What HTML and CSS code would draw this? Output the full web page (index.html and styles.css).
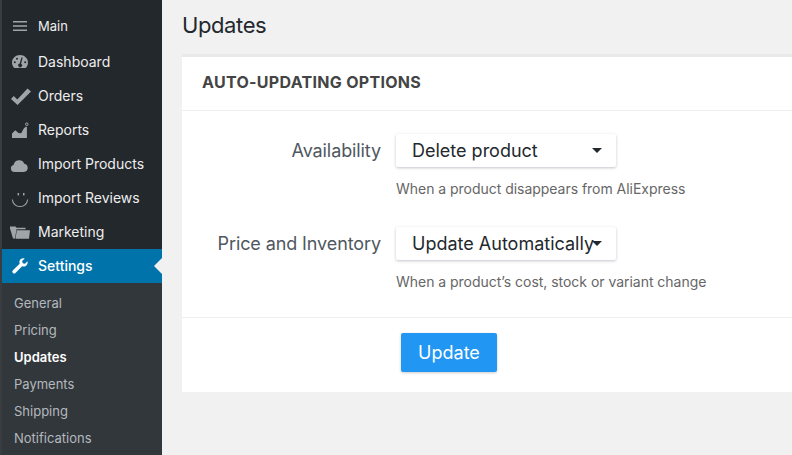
FILE: index.html
```html
<!DOCTYPE html>
<html lang="en">
<head>
  <meta charset="UTF-8" />
  <title>Updates</title>
  <link rel="stylesheet" href="styles.css">
</head>
<body>
  <div class="sidebar">
    <ul class="menu">
      <li class="menu-item menu-main">
        <svg class="icon" viewBox="0 0 16 16"><path d="M1 1h14v1.500H1zM1 5.200h14v1.500H1zM1 9.400h14v1.500H1z" transform="translate(0 2)"/></svg>
        Main
      </li>
      <li class="menu-item">
        <svg class="icon" viewBox="0 0 16 16"><path d="M8 1C3.600 1 0 4.300 0 8.400c0 2 .7 3.700 1.800 5.100.2.300.5.500.9.500h10.600c.4 0 .7-.2.900-.5C15.300 12.100 16 10.400 16 8.400 16 4.300 12.400 1 8 1zm2.700 2.600L9.100 9.700a1.900 1.900 0 1 1-1.400-.2l1.700-6.100zM2.800 7.200a1 1 0 1 1 0 2 1 1 0 0 1 0-2zM5 3.700a1 1 0 1 1 0 2 1 1 0 0 1 0-2zM13.200 7.200a1 1 0 1 1 0 2 1 1 0 0 1 0-2z" fill-rule="evenodd"/></svg>
        Dashboard
      </li>
      <li class="menu-item">
        <svg class="icon" viewBox="0 0 16 16"><path d="M-1 11 1.800 8l3.500 3.400L15.500 .5 19 3.500 5.500 17z"/></svg>
        Orders
      </li>
      <li class="menu-item">
        <svg class="icon" viewBox="0 0 16 16"><path d="M0 16v-4.500l3.300-3.300L6.500 11l2.700.2 2.600-4.700 2.200-2 .9.800V16z"/><circle cx="14.800" cy="2.200" r="1.300" fill="none" stroke="currentColor"/></svg>
        Reports
      </li>
      <li class="menu-item">
        <svg class="icon" viewBox="0 0 16 16"><path d="M2.500 16a3.500 3.500 0 0 1-.9-6.900A5.600 5.600 0 0 1 12.300 7.700 4.200 4.200 0 0 1 12 16z"/></svg>
        Import Products
      </li>
      <li class="menu-item">
        <svg class="icon" viewBox="0 0 16 16"><path d="M.3 9.500c.8 5 4.200 7 7.700 7s6.900-2 7.700-7" fill="none" stroke="currentColor" stroke-width="1.100"/><rect x="5.600" y="3" width="1.500" height="2.400"/><rect x="11" y="3" width="1.500" height="2.400"/></svg>
        Import Reviews
      </li>
      <li class="menu-item">
        <svg class="icon" viewBox="0 0 16 16"><path d="M-2 4.500V2.500h5.500l1 1.300h9v1.400H4.500L3 14.500H1zM4.800 6.200H18l-1 8.500H3.500z"/></svg>
        Marketing
      </li>
      <li class="menu-item active">
        <svg class="icon" viewBox="0 0 16 16"><path d="M15.500 3.300 13 5.800l-2.300-.6-.6-2.300L12.700.4C10.800-.2 8.500.7 7.700 2.500c-.5 1.100-.4 2.300 0 3.300L.9 12.300a1.800 1.800 0 0 0 2.600 2.600l6.600-6.700c1 .4 2.200.5 3.300 0 1.800-.8 2.700-3 2.100-4.900z"/></svg>
        Settings
      </li>
    </ul>
    <ul class="submenu">
      <li>General</li>
      <li>Pricing</li>
      <li class="current">Updates</li>
      <li>Payments</li>
      <li>Shipping</li>
      <li>Notifications</li>
    </ul>
  </div>

  <div class="content">
    <h1>Updates</h1>
    <div class="card">
      <h2>Auto-updating options</h2>
      <div class="fields">
        <div class="field">
          <div class="field-label">Availability</div>
          <div class="field-control">
            <div class="select"><span class="select-text">Delete product</span><i class="caret"></i></div>
            <p class="help">When a product disappears from AliExpress</p>
          </div>
        </div>
        <div class="field">
          <div class="field-label">Price and Inventory</div>
          <div class="field-control">
            <div class="select"><span class="select-text">Update Automatically</span><i class="caret"></i></div>
            <p class="help">When a product’s cost, stock or variant change</p>
          </div>
        </div>
      </div>
      <div class="actions">
        <button class="btn">Update</button>
      </div>
    </div>
  </div>
</body>
</html>
```

FILE: styles.css
```css
:root {
  --side-dark: #23282d;
  --side-sub: #32373c;
  --side-active: #0073aa;
  --blue: #2196f3;
}

html, body {
  height: 100%;
}

body {
  margin: 0;
  display: flex;
  height: 455px;
  overflow: hidden;
  background: #f1f1f1;
  color: #23282d;
  font-family: Inter, 'Noto Sans', sans-serif;
}

ul {
  list-style: none;
  margin: 0;
  padding: 0;
}

.sidebar {
  width: 160px;
  flex: none;
  display: flex;
  flex-direction: column;
  background: var(--side-dark);
  border-left: 2px solid #3a3d40;
}

.menu {
  padding-top: 9px;
}

.menu-item {
  display: flex;
  align-items: center;
  height: 34px;
  color: #eee;
  font-size: 14px;
  line-height: 32px;
}

.menu-main {
  margin-bottom: 2px;
  font-size: 13px;
}

.menu-item .icon {
  width: 16px;
  height: 16px;
  margin: 0 10px;
  flex: none;
  fill: currentColor;
  color: #a0a5aa;
  overflow: visible;
}

.menu-item.active {
  position: relative;
  background: var(--side-active);
  color: #fff;
  font-weight: 500;
}

.menu-item.active .icon {
  color: #fff;
}

.menu-item.active::after {
  content: "";
  position: absolute;
  right: 0;
  top: 9px;
  border: 8px solid transparent;
  border-left: 0;
  border-right-color: #f1f1f1;
}

.submenu {
  flex: 1;
  padding-top: 7px;
  background: var(--side-sub);
}

.submenu li {
  height: 27px;
  line-height: 27px;
  padding-left: 12px;
  color: #b4b9be;
  font-size: 13px;
}

.submenu li.current {
  color: #fff;
  font-weight: 600;
}

.content {
  flex: 1;
  min-width: 0;
  padding-left: 20px;
}

h1 {
  margin: 0;
  height: 54px;
  line-height: 50px;
  font-size: 22px;
  font-weight: 400;
  letter-spacing: -0.4px;
}

.card {
  width: 640px;
  height: 335px;
  background: #fff;
  border-top: 3px solid #e9e9e9;
}

h2 {
  margin: 0;
  height: 53px;
  line-height: 51px;
  padding-left: 20px;
  border-bottom: 1px solid #eee;
  color: #444;
  font-size: 16px;
  font-weight: 700;
  letter-spacing: 0.3px;
  text-transform: uppercase;
}

.fields {
  height: 207px;
  padding-top: 23px;
  box-sizing: border-box;
  border-bottom: 1px solid #eee;
}

.field {
  display: flex;
  height: 93px;
}

.field-label {
  width: 199px;
  line-height: 34px;
  text-align: right;
  color: #50575e;
  font-size: 18px;
  letter-spacing: -0.1px;
}

.field-control {
  margin-left: 15px;
}

.select {
  display: flex;
  align-items: center;
  width: 220px;
  height: 33px;
  box-sizing: border-box;
  padding-left: 16px;
  background: #fff;
  border-radius: 2px;
  box-shadow: 0 1px 3px rgba(50, 60, 90, 0.3);
  color: #23282d;
  font-size: 18px;
}

.select-text {
  flex: none;
  width: 180px;
  height: 33px;
  line-height: 33px;
  white-space: nowrap;
}

.caret {
  flex: none;
  position: relative;
  border: 5px solid transparent;
  border-bottom: 0;
  border-top-color: #23282d;
}

.help {
  margin: 13px 0 0;
  color: #666;
  font-size: 14px;
  letter-spacing: -0.03px;
  line-height: 18px;
}

.actions {
  padding: 15px 0 0 219px;
}

.btn {
  width: 96px;
  height: 39px;
  padding: 0;
  border: 0;
  border-radius: 2px;
  background: var(--blue);
  box-shadow: 0 1px 3px rgba(0, 0, 0, 0.2);
  color: #fff;
  font-family: inherit;
  font-size: 18px;
}
```
